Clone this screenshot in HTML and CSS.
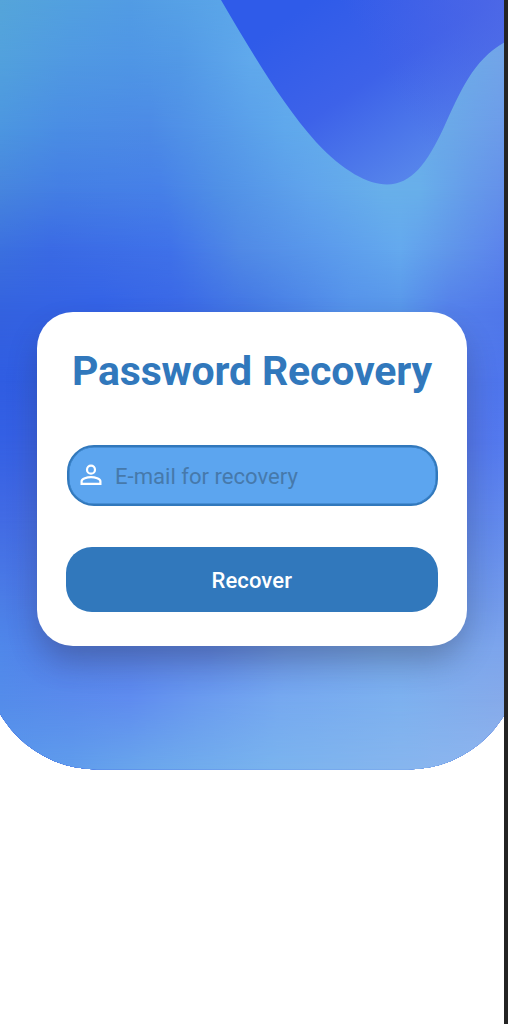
FILE: index.html
```
<!DOCTYPE html>
<html lang="en">
<head>
<meta charset="utf-8">
<title>Password Recovery</title>
<link rel="stylesheet" href="styles.css">
</head>
<body>
<main class="screen">
  <div class="backdrop" aria-hidden="true">
    <i class="tone tone-1"></i><i class="tone tone-2"></i><i class="tone tone-3"></i><i class="tone tone-4"></i>
    <i class="tone tone-5"></i><i class="tone tone-6"></i><i class="tone tone-7"></i><i class="tone tone-8"></i>
    <i class="tone tone-9"></i><i class="tone tone-10"></i><i class="tone tone-11"></i><i class="tone tone-12"></i>
    <svg class="wave" viewBox="0 0 504 200">
      <defs>
        <linearGradient id="waveFill" gradientUnits="userSpaceOnUse" x1="285" y1="20" x2="405" y2="200">
          <stop offset="0" stop-color="#2f5be9"/>
          <stop offset=".45" stop-color="#3d62e9"/>
          <stop offset="1" stop-color="#5a8aeb"/>
        </linearGradient>
        <linearGradient id="waveTint" gradientUnits="userSpaceOnUse" x1="380" y1="70" x2="500" y2="0">
          <stop offset="0" stop-color="#4c61e6" stop-opacity="0"/>
          <stop offset="1" stop-color="#5068e6" stop-opacity=".75"/>
        </linearGradient>
      </defs>
      <path fill="url(#waveFill)" d="M221 0C251 51 282 104 316 142C343 171 368 184.500 387 184.500C411 184.500 427 164 444 127C460 92 473 60 504 42.500V0Z"/>
      <path fill="url(#waveTint)" d="M221 0C251 51 282 104 316 142C343 171 368 184.500 387 184.500C411 184.500 427 164 444 127C460 92 473 60 504 42.500V0Z"/>
    </svg>
  </div>
  <form class="card">
    <h1 class="title">Password Recovery</h1>
    <label class="field">
      <svg class="field-icon" viewBox="0 0 22 22" fill="none" stroke="#fff" stroke-width="2.200">
        <circle cx="11" cy="5.700" r="4"/>
        <path d="M1.600 19.900V17.300C1.600 14.900 7 13.100 11 13.100S20.400 14.900 20.400 17.300V19.900Z"/>
      </svg>
      <span class="placeholder">E-mail for recovery</span>
    </label>
    <button class="submit" type="button">Recover</button>
  </form>
</main>
</body>
</html>
```
FILE: styles.css
```
* { box-sizing: border-box; }
body { margin: 0; background: #242424; font-family: Roboto, sans-serif; }
.screen {
  position: relative;
  width: 504px;
  height: 1024px;
  padding: 312px 37px 0;
  background: #fff;
  overflow: hidden;
}
/* Soft colour field: each tone fades in below the one before it. */
.backdrop {
  position: absolute;
  top: 0;
  left: -15px;
  right: -16px;
  height: 769.500px;
  padding: 0 16px 0 15px;
  clip-path: inset(0 round 0 0 112px 112px);
  background: linear-gradient(90deg, #55a5da 15px, #52a0e0 85px, #529ce4 145px, #5aa5e8 235px, #62aaec 300px, #6ea6e8 519px);
}
.tone {
  position: absolute;
  inset: 0;
  -webkit-mask-image: linear-gradient(transparent var(--from), #000 var(--to));
  mask-image: linear-gradient(transparent var(--from), #000 var(--to));
}
.tone-1 { --from: 0px; --to: 60px; background: linear-gradient(90deg, #52a1dd 15px, #5099e2 85px, #4f96e5 145px, #5299e6 195px, #60a9ec 265px, #6bace8 465px, #72a4e8 519px); }
.tone-2 { --from: 60px; --to: 130px; background: linear-gradient(90deg, #4c96e0 15px, #4a8de4 75px, #4c8ae6 165px, #5497e8 225px, #5fa8ec 300px, #69b0ea 400px, #6ba8e8 465px, #6c9bea 519px); }
.tone-3 { --from: 130px; --to: 190px; background: linear-gradient(90deg, #4785de 15px, #447ee4 75px, #4680e8 175px, #5090e6 235px, #60a4ec 325px, #68b0ea 400px, #68afea 435px, #659bea 485px, #6490ea 519px); }
.tone-4 { --from: 190px; --to: 250px; background: linear-gradient(90deg, #3b70df 15px, #3a6ae4 65px, #3f71e9 185px, #5089e6 255px, #5b9bec 345px, #64a9ee 415px, #6096ea 465px, #5b83ec 519px); }
.tone-5 { --from: 250px; --to: 310px; background: linear-gradient(90deg, #3462df 15px, #3462e6 115px, #3a68e6 195px, #4478e4 265px, #5592ea 365px, #5896ea 415px, #5480ea 465px, #5078ea 519px); }
.tone-6 { --from: 310px; --to: 380px; background: linear-gradient(90deg, #305de2 15px, #3462e6 195px, #5278ea 465px, #4e75ec 519px); }
.tone-7 { --from: 380px; --to: 440px; background: linear-gradient(90deg, #3460e4 15px, #3a60e2 75px, #5276ec 465px, #5479ee 519px); }
.tone-8 { --from: 440px; --to: 520px; background: linear-gradient(90deg, #426be4 15px, #466ce2 75px, #5c84e8 465px, #6289ec 519px); }
.tone-9 { --from: 520px; --to: 600px; background: linear-gradient(90deg, #4b7de6 15px, #4c74e4 75px, #6a96e8 465px, #7299ea 519px); }
.tone-10 { --from: 600px; --to: 650px; background: linear-gradient(90deg, #5088ea 15px, #527ee8 75px, #5680e8 135px, #5f88ea 225px, #6d9aec 300px, #77a8ec 400px, #7da5ec 519px); }
.tone-11 { --from: 650px; --to: 700px; background: linear-gradient(90deg, #548cea 15px, #5a8bec 85px, #5f8cef 145px, #6a9bef 215px, #76a9f0 295px, #7db1ef 415px, #86aaea 519px); }
.tone-12 { --from: 700px; --to: 768px; background: linear-gradient(90deg, #5a98ec 15px, #5f9cec 85px, #6ba7ec 165px, #79b3ee 285px, #86b5ee 415px, #8fb5ef 519px); }
.wave { position: relative; display: block; width: 504px; height: 200px; }
.card {
  position: relative;
  display: flex;
  flex-direction: column;
  height: 334px;
  padding: 34px 29.500px;
  border-radius: 36px;
  width: 430px;
  background: #fff;
  box-shadow: 0 17px 32px -3px rgba(45, 50, 60, .33);
}
.title {
  margin: 0 0 50px;
  height: 49px;
  line-height: 50px;
  font-size: 41px;
  letter-spacing: -.15px;
  font-weight: 700;
  text-align: center;
  white-space: nowrap;
  color: #3178bc;
}
.field {
  display: flex;
  align-items: center;
  height: 61px;
  flex: none;
  padding-left: 11.500px;
  gap: 13px;
  border: 2px solid #3178bc;
  border-radius: 27px;
  background: #5ca5ef;
  box-shadow: inset 0 0 0 .5px #3178bc;
}
.field-icon { width: 22px; height: 22px; margin-top: -1px; }
.placeholder { padding-top: 1px; color: #4679ab; font-size: 22.100px; white-space: nowrap; }
.submit {
  flex: none;
  height: 65px;
  margin: 41px 0 0 -.5px;
  padding: 2px 0 0;
  border: 0;
  border-radius: 26px;
  background: #3178bc;
  color: #fff;
  font: 500 22px Roboto, sans-serif;
  letter-spacing: .12px;
}
```
